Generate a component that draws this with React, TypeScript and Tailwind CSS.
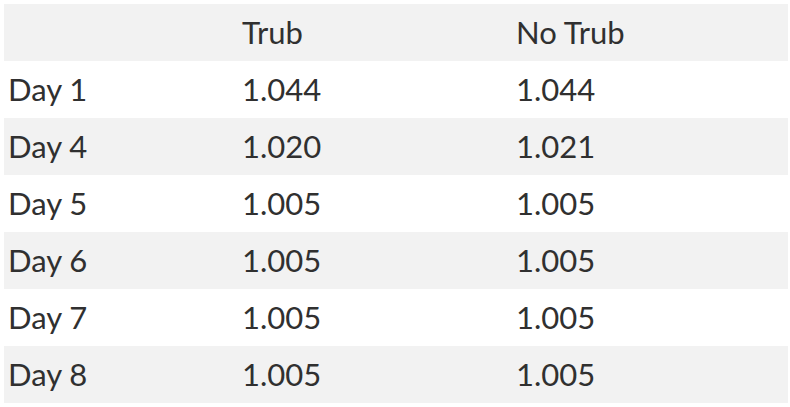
import React from "react";

const rows = [
  { day: "Day 1", trub: "1.044", noTrub: "1.044" },
  { day: "Day 4", trub: "1.020", noTrub: "1.021" },
  { day: "Day 5", trub: "1.005", noTrub: "1.005" },
  { day: "Day 6", trub: "1.005", noTrub: "1.005" },
  { day: "Day 7", trub: "1.005", noTrub: "1.005" },
  { day: "Day 8", trub: "1.005", noTrub: "1.005" },
];

const rowCls = "grid grid-cols-[234px_274px_1fr] items-center h-[57px] pl-[4px]";

export default function App() {
  return (
    <div className="w-[790px] h-[407px] bg-white pt-[4px] pl-[4px] font-['Lato',sans-serif] text-[31px] text-[#303030]">
      <div className="w-[784px]">
        {/* header */}
        <div className={`${rowCls} bg-[#f2f2f2]`}>
          <span />
          <span>Trub</span>
          <span>No Trub</span>
        </div>
        {rows.map((r, i) => (
          <div key={r.day} className={`${rowCls} ${i % 2 === 1 ? "bg-[#f2f2f2]" : "bg-white"}`}>
            <span>{r.day}</span>
            <span>{r.trub}</span>
            <span>{r.noTrub}</span>
          </div>
        ))}
      </div>
    </div>
  );
}
